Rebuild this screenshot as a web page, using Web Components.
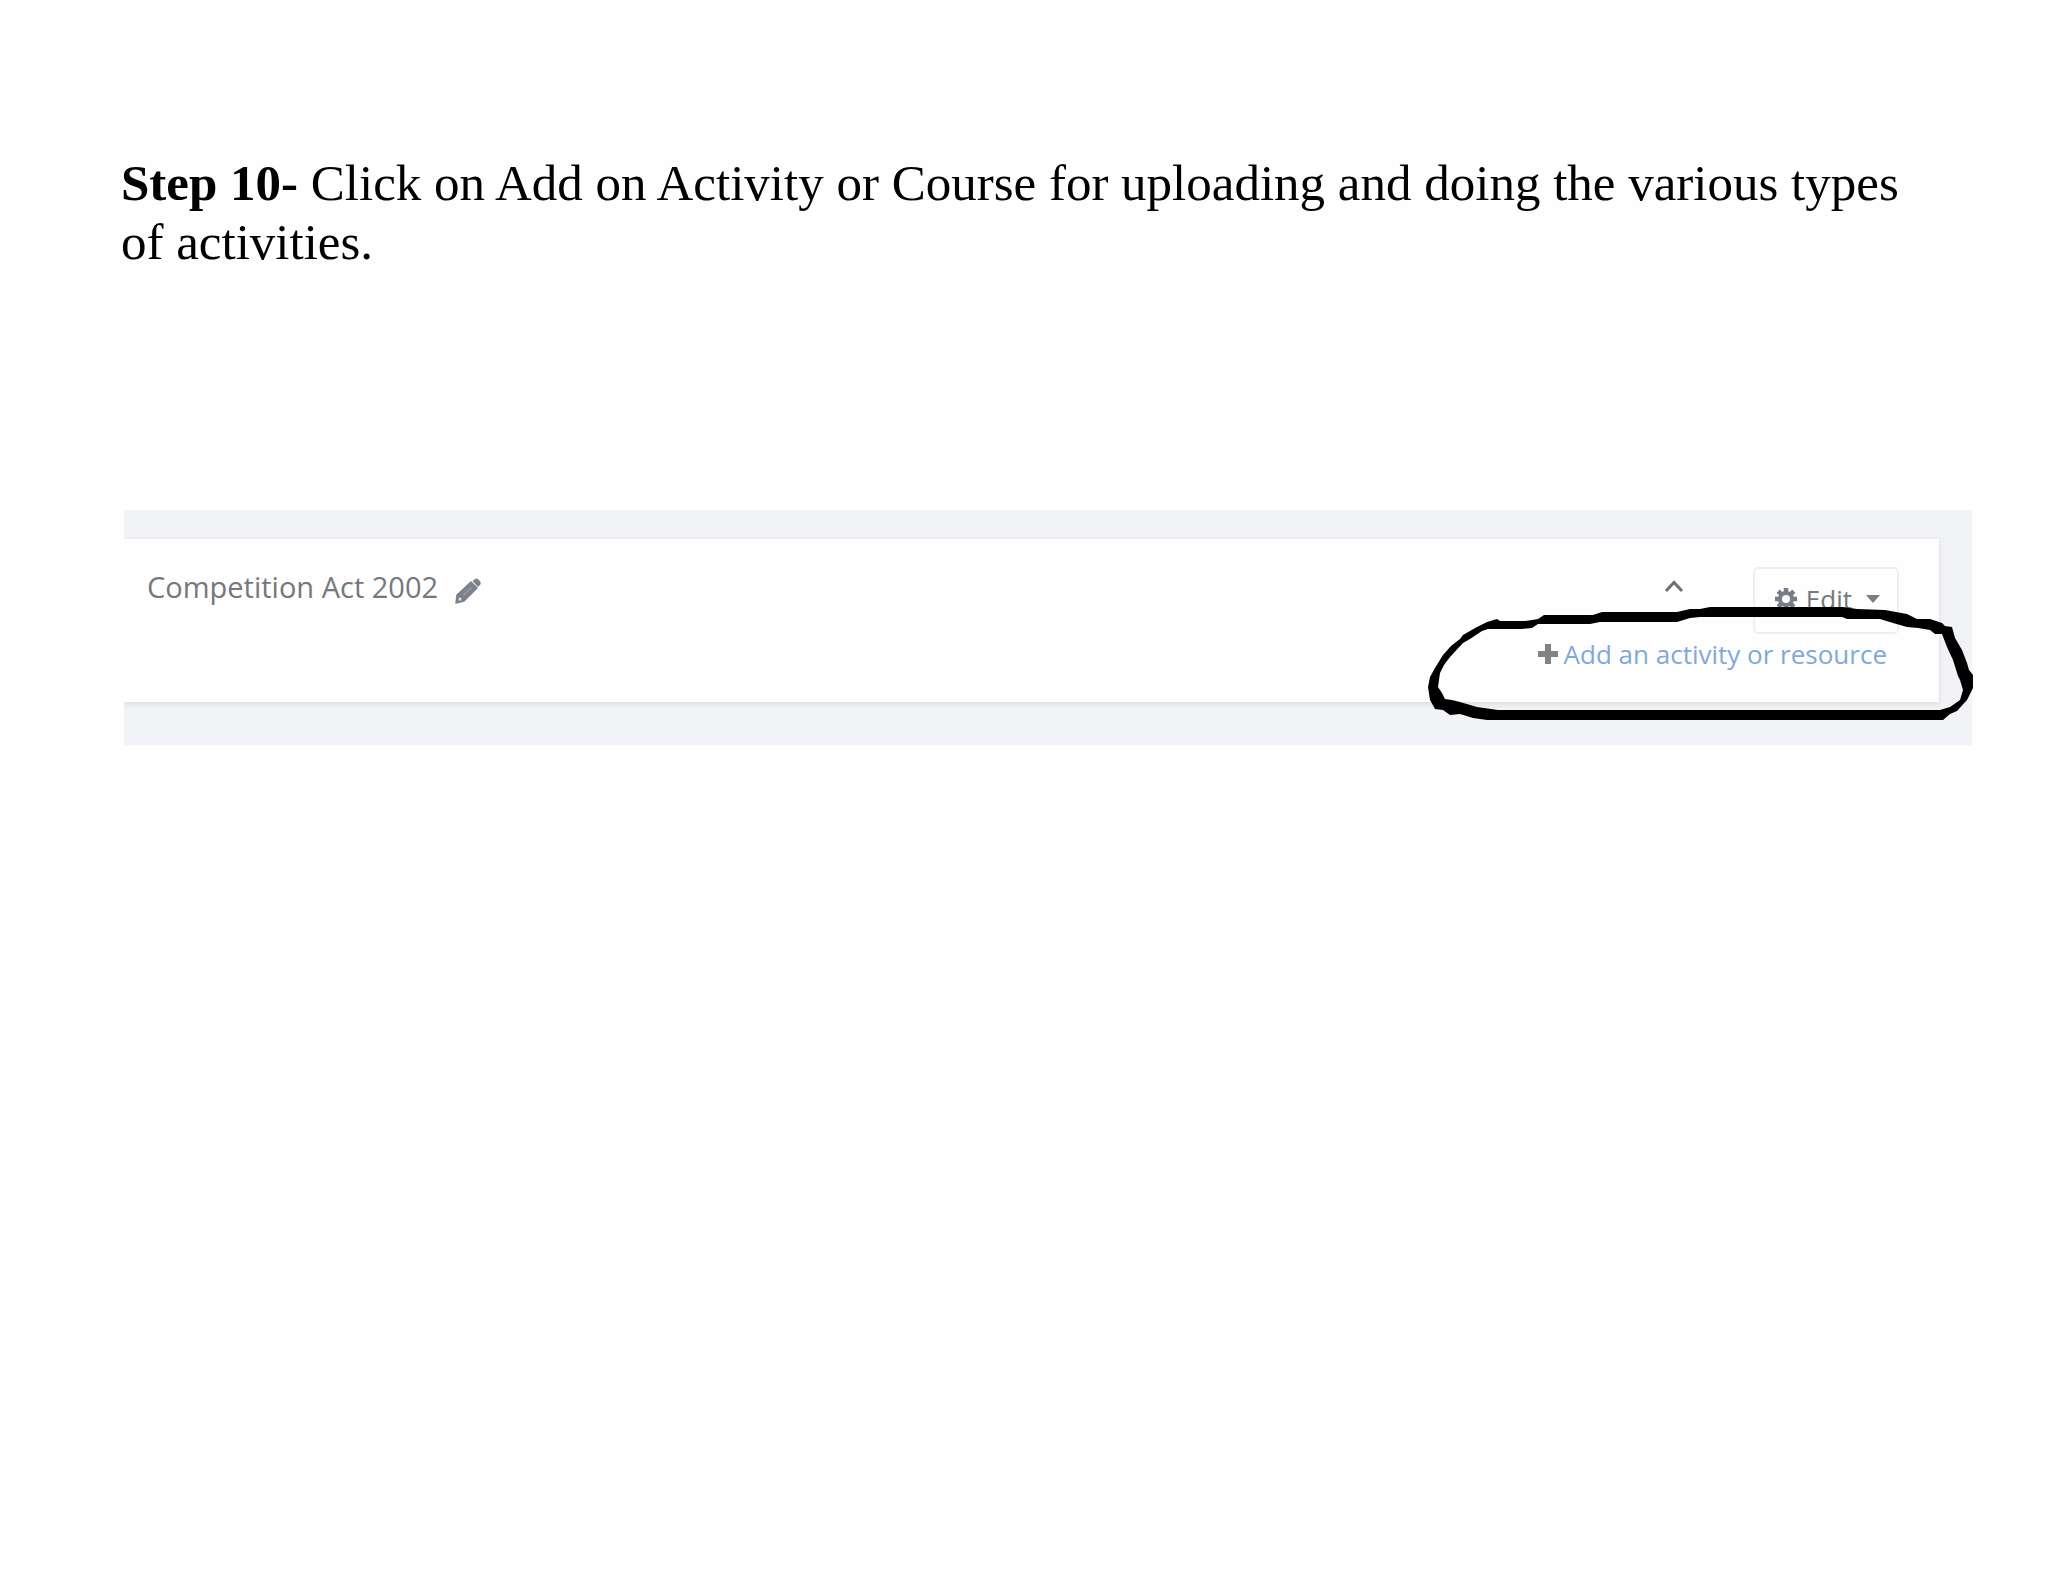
<!DOCTYPE html>
<html lang="en">
<head>
<meta charset="utf-8">
<title>Step 10</title>
<style>
  body { margin: 0; background: #fefefe; }
</style>
</head>
<body>
<guide-page>
  <guide-step label="Step 10-">Click on Add on Activity or Course for uploading and doing the various types of activities.</guide-step>
  <course-shot>
    <course-section>
      <section-title slot="title">Competition Act 2002</section-title>
      <section-actions slot="actions"></section-actions>
    </course-section>
    <marker-loop slot="marker"></marker-loop>
  </course-shot>
</guide-page>
<script>
const define = (name, html) => customElements.define(name, class extends HTMLElement {
  constructor() {
    super();
    this.attachShadow({ mode: "open" }).innerHTML = html;
  }
  connectedCallback() {
    const label = this.shadowRoot.querySelector("[data-label]");
    if (label) label.textContent = this.getAttribute("label");
  }
});

define("guide-page", `
  <style>
    :host { display: flex; flex-direction: column; gap: 238px; padding: 154px 76px 152px 124px; }
  </style>
  <slot></slot>`);

define("guide-step", `
  <style>
    :host { display: block; margin-left: -3px; padding-right: 40px; color: #000;
      font-family: "Liberation Serif", "Times New Roman", serif; font-size: 51px; line-height: 59px; }
    p { margin: 0; }
  </style>
  <p><b data-label></b> <slot></slot></p>`);

define("course-shot", `
  <style>
    :host { display: block; position: relative; padding: 29px 33px 43px 0; background: #f1f3f6;
      font-family: "Open Sans", "Noto Sans", sans-serif; color: #75787c; }
  </style>
  <slot></slot>
  <slot name="marker"></slot>`);

define("course-section", `
  <style>
    :host { display: flex; justify-content: space-between; align-items: flex-start;
      padding: 28px 40px 32px 23px; background: #fefefe;
      box-shadow: 0 0 3px #dfe1e5, 0 3px 5px #e0e1e4; clip-path: inset(-8px -8px -12px 0); }
  </style>
  <slot name="title"></slot>
  <slot name="actions"></slot>`);

define("section-title", `
  <style>
    :host { display: flex; align-items: center; gap: 16px; }
    h3 { margin: 0; font-size: 29px; font-weight: 400; line-height: 40px; }
    button { display: flex; margin: 8px 0 0; padding: 0; border: 0; background: none; }
  </style>
  <h3><slot></slot></h3>
  <button type="button" aria-label="Edit section name">
    <svg width="28" height="28" viewBox="0 0 28 28">
      <path d="M2 26 L3 18 L17 5 L23 11 L10 24 Z" fill="#7c828b" stroke="#7c828b" stroke-width="1.500" stroke-linejoin="round"/>
      <path d="M18.500 4 L21 2 Q23 0.500 25 3 L26.500 5 Q27.500 7 25.500 8.500 L24 10 Z" fill="#7c828b"/>
      <path d="M5 20.500 L7.500 21 L7 23.500 L4.500 23.500 Z" fill="#dfe1e4"/>
      <path d="M9 18.500 L17.500 10.500" stroke="#9499a1" stroke-width="1.500" fill="none"/>
    </svg>
  </button>`);

define("section-actions", `
  <style>
    :host { display: flex; flex-direction: column; align-items: flex-end; gap: 4px; font-size: 26px; line-height: 32px; }
    .row { display: flex; align-items: flex-start; gap: 69px; }
    button { font: inherit; color: inherit; background: none; }
    .fold { display: flex; margin: 12px 0 0; padding: 0; border: 0; }
    .edit { display: flex; align-items: center; box-sizing: border-box; height: 67px; padding: 0 17px 4px 19px;
      border: 2px solid #eeeff1; border-radius: 5px; }
    .edit span { margin: 0 14px 0 8px; }
    a { display: flex; align-items: center; gap: 6px; margin-right: 12px; color: #7fa9da; text-decoration: none; }
  </style>
  <div class="row">
    <button class="fold" type="button" aria-label="Collapse section">
      <svg width="20" height="14" viewBox="0 0 20 14"><path d="M2 12 L10 3.500 L18 12" fill="none" stroke="#6d6f72" stroke-width="3"/></svg>
    </button>
    <button class="edit" type="button">
      <svg width="24" height="24" viewBox="0 0 24 24">
        <g stroke="#777c88" stroke-width="4.500"><path d="M12 1V23M1 12H23M4.200 4.200L19.800 19.800M19.800 4.200L4.200 19.800"/></g>
        <circle cx="12" cy="12" r="8" fill="#777c88"/><circle cx="12" cy="12" r="4" fill="#fefefe"/>
      </svg>
      <span>Edit</span>
      <svg width="14" height="8" viewBox="0 0 14 8"><path d="M0 0H14L7 8Z" fill="#7b7d80"/></svg>
    </button>
  </div>
  <a href="#">
    <svg width="20" height="20" viewBox="0 0 20 20"><path d="M7 0H13V7H20V13H13V20H7V13H0V7H7Z" fill="#808284"/></svg>
    <span>Add an activity or resource</span>
  </a>`);

define("marker-loop", `
  <style>
    :host { position: absolute; top: 90px; right: -4px; pointer-events: none; }
    svg { display: block; }
  </style>
  <svg width="552" height="124" viewBox="1424 600 552 124" aria-hidden="true">
    <path fill="#000" fill-rule="evenodd" d="M1428 687 L1430 677 L1435 668 L1443 655 L1451 646 L1460 639 L1463 635 L1477 627 L1487 622 L1497 619 L1500 621 L1525 621 L1532 620 L1538 619 L1544 615 L1593 615 L1602 612 L1677 612 L1690 609 L1700 609 L1710 607 L1843 607 L1857 609 L1885 610 L1907 614 L1917 619 L1930 619 L1942 623 L1945 626 L1952 627 L1955 638 L1962 650 L1967 663 L1969 670 L1973 675 L1973 688 L1967 700 L1957 711 L1950 714 L1943 720 L1487 720 L1473 718 L1460 714 L1450 715 L1443 710 L1435 709 L1430 700 Z
      M1438 687 L1440 673 L1444 665 L1450 657 L1463 643 L1470 639 L1482 631 L1488 629 L1522 629 L1532 628 L1538 624 L1590 624 L1600 622 L1677 622 L1690 618 L1700 617 L1842 617 L1847 619 L1880 619 L1893 623 L1907 627 L1918 628 L1930 630 L1935 634 L1942 634 L1947 647 L1953 660 L1958 676 L1960 680 L1963 690 L1960 700 L1950 707 L1940 710 L1498 710 L1477 707 L1460 702 L1452 700 L1445 699 L1442 693 Z"/>
  </svg>`);
</script>
</body>
</html>
